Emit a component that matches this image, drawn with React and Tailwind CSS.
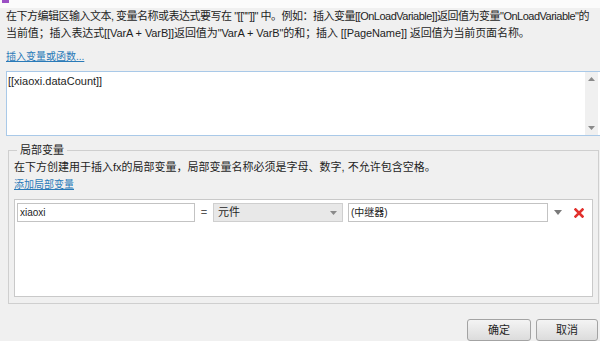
import React from "react";

export default function App() {
  const font = { fontFamily: '"Liberation Sans", "Noto Sans CJK SC", sans-serif' };
  return (
    <div
      className="w-[600px] h-[341px] bg-[#f0f0f0] overflow-hidden text-[#1e1e1e]"
      style={font}
    >
      <div className="h-[8px] bg-[#fbfbfb] flex">
        <div className="ml-[2px] w-[7px] h-[3px] bg-[#9b4fc4]" />
      </div>
      <div className="px-[6px] text-[11px] leading-[17px] whitespace-nowrap">
        <div className="tracking-[-0.5px]">在下方编辑区输入文本, 变量名称或表达式要写在 "[[""]]" 中。例如：插入变量[[OnLoadVariable]]返回值为变量"OnLoadVariable"的</div>
        <div className="tracking-[-0.1px]">当前值；插入表达式[[VarA + VarB]]返回值为"VarA + VarB"的和；插入 [[PageName]] 返回值为当前页面名称。</div>
      </div>
      <div className="px-[6px] mt-[8px] text-[10px] leading-[14px]">
        <span className="text-[#2a7ab8] underline">插入变量或函数...</span>
      </div>
      <div className="ml-[6px] mt-[7px] w-[596px] h-[65px] bg-white border border-[#a9c9e8] flex">
        <div className="flex-1 px-[1px] pt-[1px] text-[11px] leading-[16px]">[[xiaoxi.dataCount]]</div>
        <div className="w-[13px] mr-[3px] bg-[#f0f0f0] flex flex-col justify-between items-center py-[5px]">
          <svg width="7" height="4" viewBox="0 0 7 4"><path d="M3.5 0L7 4H0z" fill="#8a8a8a" /></svg>
          <svg width="7" height="4" viewBox="0 0 7 4"><path d="M0 0H7L3.5 4z" fill="#8a8a8a" /></svg>
        </div>
      </div>
      <fieldset className="mx-[8px] mt-[7px] border border-[#cfcfcf] px-[5px] pb-[6px] w-[591px]">
        <legend className="ml-[3px] px-[3px] text-[11px] leading-[14px]">局部变量</legend>
        <div className="pt-[2px] text-[11px] leading-[17px] whitespace-nowrap">
          在下方创建用于插入fx的局部变量，局部变量名称必须是字母、数字, 不允许包含空格。
        </div>
        <div className="mt-[2px] text-[10px] leading-[14px]">
          <span className="text-[#2a7ab8] underline">添加局部变量</span>
        </div>
        <div className="mt-[7px] h-[98px] bg-white border border-[#c9c9c9] pl-[2px] pt-[3px]">
          <div className="flex items-center h-[19px]">
            <div className="w-[178px] h-[19px] border border-[#c3c3c3] bg-white text-[10px] leading-[17px] px-[2px]">xiaoxi</div>
            <div className="w-[18px] text-center text-[11px] leading-[17px] text-[#555]">=</div>
            <div className="w-[130px] h-[19px] border border-[#cfcfcf] bg-[#e8e8e8] flex items-center justify-between pl-[4px] pr-[5px]">
              <span className="text-[11px] leading-[17px]">元件</span>
              <svg width="7" height="4" viewBox="0 0 7 4"><path d="M0 0H7L3.5 4z" fill="#8a8a8a" /></svg>
            </div>
            <div className="ml-[5px] w-[200px] h-[19px] border border-[#c3c3c3] bg-white text-[10px] leading-[17px] px-[2px]">(中继器)</div>
            <div className="w-[18px] flex justify-center pl-[2px]">
              <svg width="8" height="5" viewBox="0 0 8 5"><path d="M0 0H8L4 5z" fill="#7a7a7a" /></svg>
            </div>
            <div className="ml-[8px] flex">
              <svg width="10" height="10" viewBox="0 0 10 10">
                <path d="M1.5 1.5L8.5 8.5M8.5 1.5L1.5 8.5" stroke="#e2302c" strokeWidth="2.6" strokeLinecap="square" />
              </svg>
            </div>
          </div>
        </div>
      </fieldset>
      <div className="flex justify-end gap-[5px] mt-[15px] pr-[2px]">
        <div className="w-[64px] h-[22px] rounded-[3px] border border-[#a3a3a3] bg-gradient-to-b from-[#f4f4f4] to-[#dcdcdc] flex items-center justify-center text-[11px]">确定</div>
        <div className="w-[62px] h-[22px] rounded-[3px] border border-[#a3a3a3] bg-gradient-to-b from-[#f4f4f4] to-[#dcdcdc] flex items-center justify-center text-[11px]">取消</div>
      </div>
    </div>
  );
}
